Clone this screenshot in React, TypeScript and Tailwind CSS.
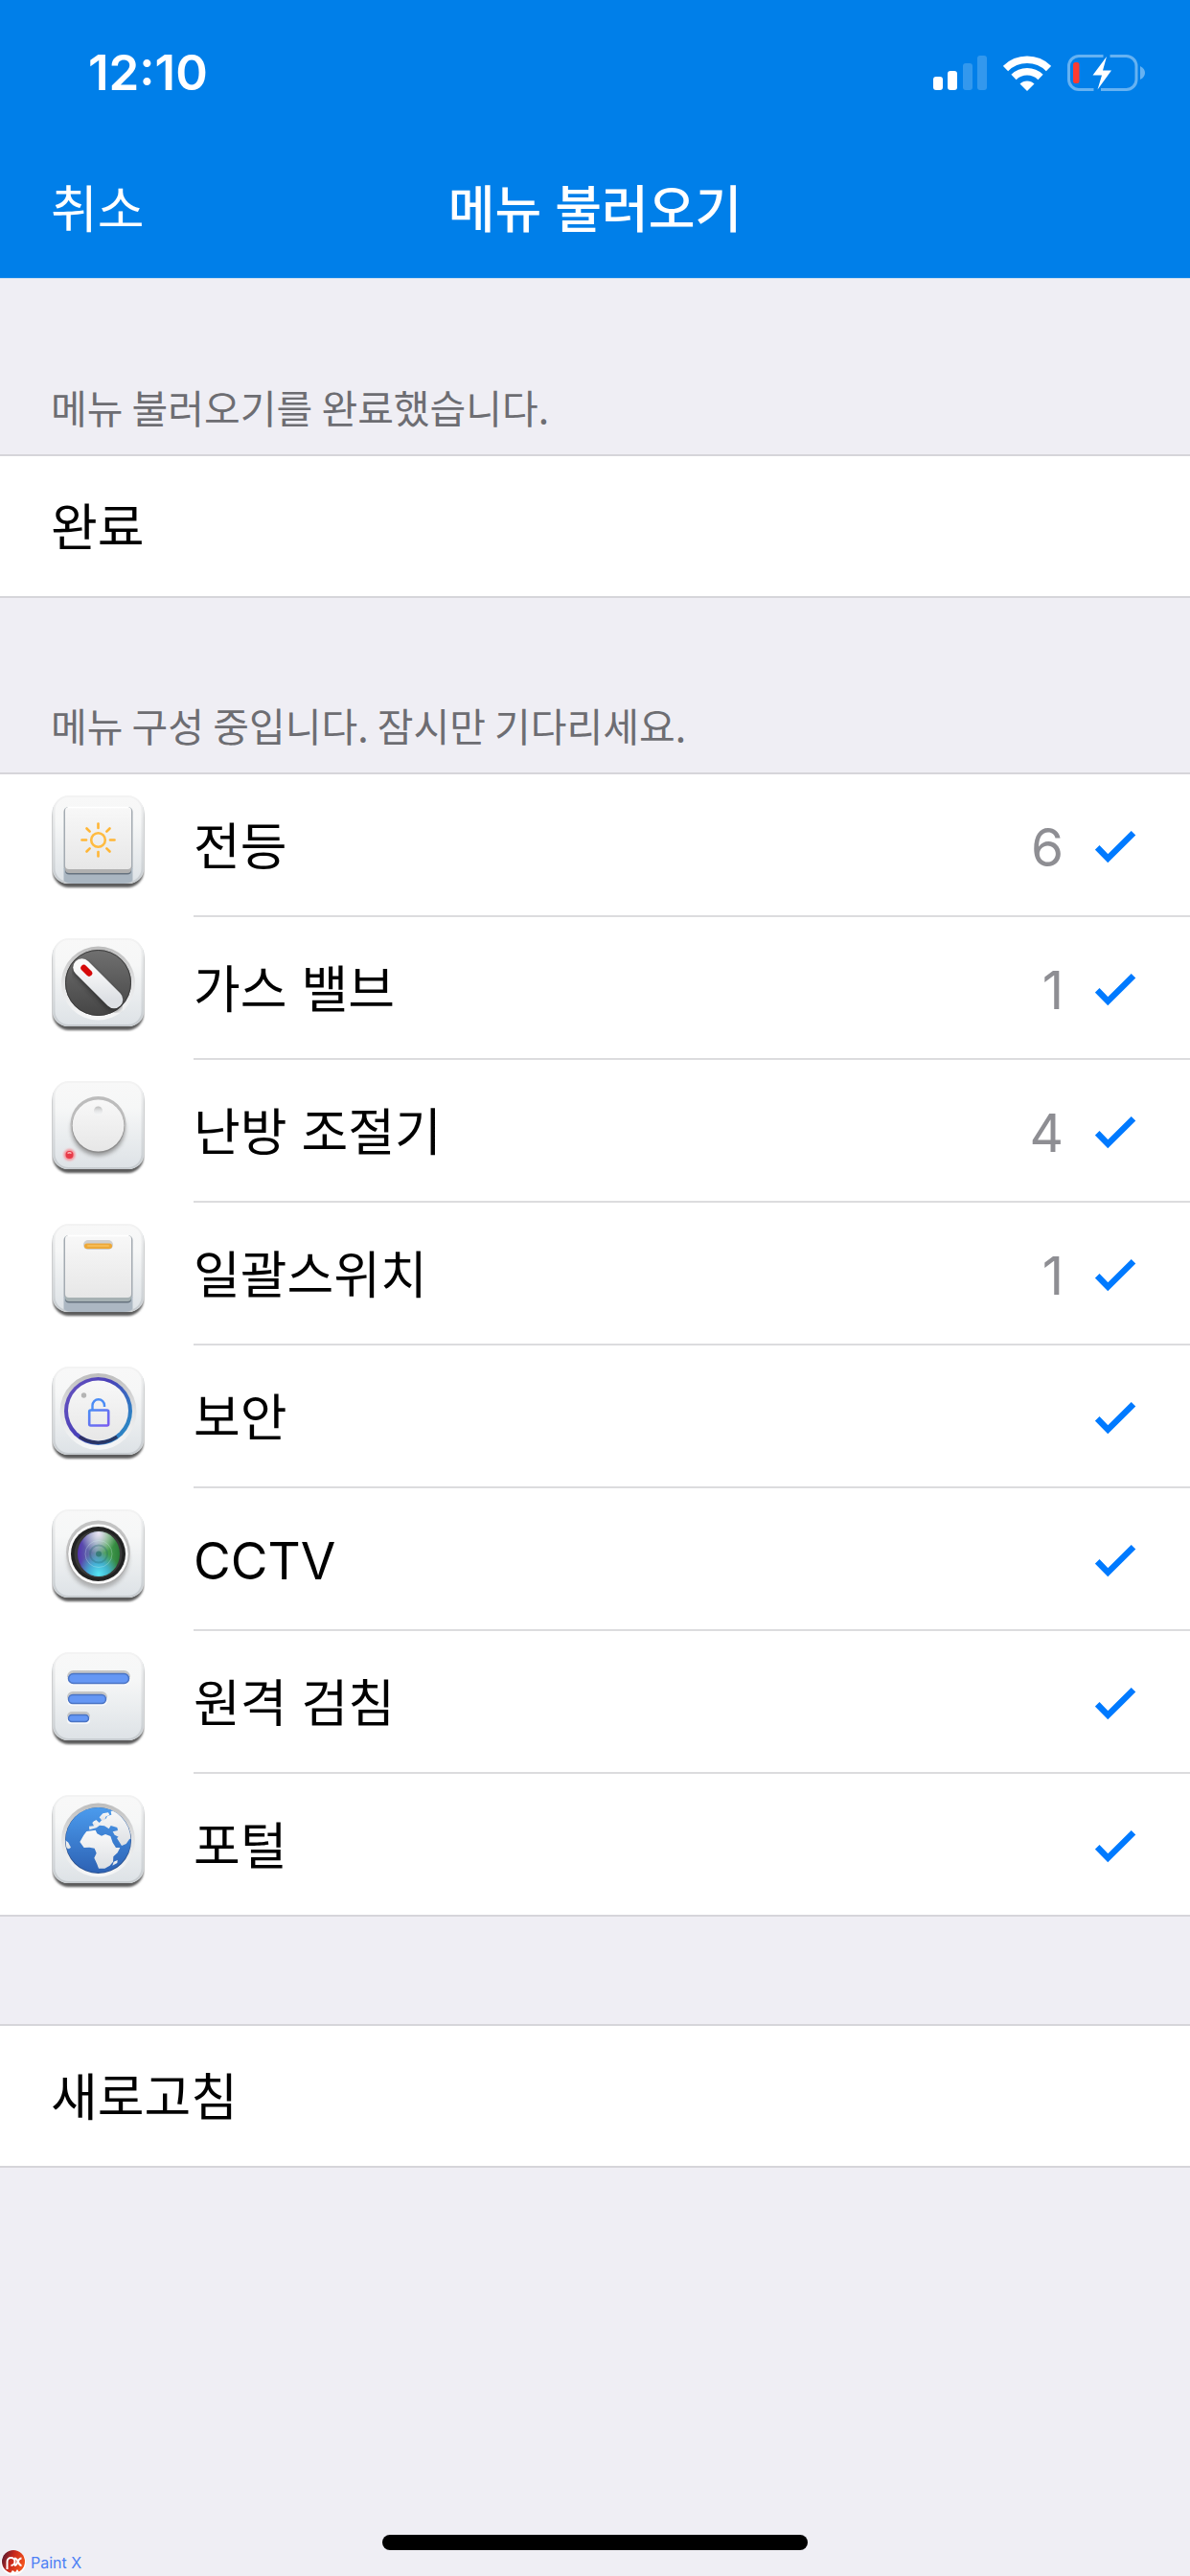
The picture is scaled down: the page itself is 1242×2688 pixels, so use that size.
import type { ReactNode } from "react";

type Item = { name: string; count?: number; icon: ReactNode };

// 공통 아이콘 바탕 (둥근 타일)
function Tile({ children }: { children: ReactNode }) {
  return (
    <svg viewBox="0 0 97 99" className="h-[99px] w-[97px] shrink-0" aria-hidden="true">
      <rect x="1" y="6" width="95" height="90" rx="17" fill="#5c5c5c" filter="url(#soft)" />
      <rect x="0.5" y="2" width="96" height="90" rx="16" fill="#cfd2d4" filter="url(#hair)" />
      <rect x="1.5" y="0.5" width="94" height="91.5" rx="16" fill="url(#tile)" />
      <rect x="2.5" y="1" width="92" height="90" rx="15" fill="none" stroke="url(#tileEdge)" strokeWidth="2" />
      {children}
    </svg>
  );
}

function Defs() {
  return (
    <svg width="0" height="0" className="absolute" aria-hidden="true">
      <defs>
        <filter id="soft" x="-10%" y="-10%" width="120%" height="120%"><feGaussianBlur stdDeviation="1" /></filter>
        <filter id="hair"><feGaussianBlur stdDeviation="0.6" /></filter>
        <filter id="shade" x="-30%" y="-30%" width="160%" height="160%"><feGaussianBlur stdDeviation="2" /></filter>
        <linearGradient id="tile" x1="0" y1="0" x2="0" y2="1">
          <stop offset="0" stopColor="#f8f8f8" />
          <stop offset="0.3" stopColor="#f6f7f7" />
          <stop offset="1" stopColor="#dde2e6" />
        </linearGradient>
        <linearGradient id="tileEdge" x1="0" y1="0" x2="0" y2="1">
          <stop offset="0" stopColor="#f3f3f3" />
          <stop offset="1" stopColor="#c6cbcf" />
        </linearGradient>
        <linearGradient id="key" x1="0" y1="0" x2="0" y2="1">
          <stop offset="0" stopColor="#f8f8f8" />
          <stop offset="1" stopColor="#e7e7e7" />
        </linearGradient>
        <linearGradient id="rim" x1="0" y1="0" x2="0" y2="1">
          <stop offset="0" stopColor="#bdbdbd" />
          <stop offset="0.5" stopColor="#e3e4e5" />
          <stop offset="1" stopColor="#f6f7f8" />
        </linearGradient>
        <linearGradient id="dark" x1="0" y1="0" x2="0" y2="1">
          <stop offset="0" stopColor="#707070" />
          <stop offset="1" stopColor="#454545" />
        </linearGradient>
        <linearGradient id="ring" x1="0" y1="0" x2="1" y2="0.6">
          <stop offset="0" stopColor="#6a55c0" />
          <stop offset="0.5" stopColor="#4a40b8" />
          <stop offset="1" stopColor="#2c84c4" />
        </linearGradient>
        <linearGradient id="lock" x1="0" y1="0" x2="1" y2="1">
          <stop offset="0" stopColor="#4b8cf5" />
          <stop offset="1" stopColor="#7a5cf0" />
        </linearGradient>
        <linearGradient id="lens" x1="0" y1="0" x2="1" y2="0">
          <stop offset="0" stopColor="#5230b0" />
          <stop offset="0.45" stopColor="#6c93a4" />
          <stop offset="0.7" stopColor="#4aa352" />
          <stop offset="1" stopColor="#2a7d38" />
        </linearGradient>
        <radialGradient id="lensTop" cx="0.5" cy="0.05" r="0.45">
          <stop offset="0" stopColor="#f3e8fa" stopOpacity="0.95" />
          <stop offset="1" stopColor="#f3e8fa" stopOpacity="0" />
        </radialGradient>
        <radialGradient id="lensLow" cx="0.5" cy="0.95" r="0.5">
          <stop offset="0" stopColor="#55e6f5" />
          <stop offset="0.5" stopColor="#3fb4dc" stopOpacity="0.85" />
          <stop offset="1" stopColor="#3fa4d0" stopOpacity="0" />
        </radialGradient>
        <linearGradient id="sea" x1="0" y1="0" x2="0" y2="1">
          <stop offset="0" stopColor="#4b9bed" />
          <stop offset="1" stopColor="#2d62b4" />
        </linearGradient>
        <linearGradient id="land" x1="0" y1="0" x2="0" y2="1">
          <stop offset="0" stopColor="#fafafa" />
          <stop offset="1" stopColor="#dde0e4" />
        </linearGradient>
        <linearGradient id="brand" x1="0" y1="0" x2="1" y2="0.4">
          <stop offset="0" stopColor="#3c1836" />
          <stop offset="0.5" stopColor="#c8281c" />
          <stop offset="1" stopColor="#f0501c" />
        </linearGradient>
        <clipPath id="globe"><circle cx="48.5" cy="47" r="34" /></clipPath>
      </defs>
    </svg>
  );
}

function Key({ well, slab }: { well: string; slab: string }) {
  return (
    <>
      <rect x="12.5" y="12" width="72" height="68" rx="5" fill="#a4abb2" filter="url(#hair)" />
      <path d="M12.5 76h72v13q-3 3-10 3h-52q-7 0-10-3z" fill={well} />
      <rect x="14" y="15" width="69" height="67.500" rx="4" fill="#66737f" filter="url(#hair)" />
      <rect x="14" y="14" width="69" height="67" rx="4" fill={slab} />
      <rect x="14" y="12" width="69" height="65" rx="4" fill="url(#key)" />
      <path d="M17 12.5h63" stroke="#fff" strokeWidth="1.5" />
    </>
  );
}

const rays = [0, 45, 90, 135, 180, 225, 270, 315];

const items: Item[] = [
  {
    name: "전등",
    count: 6,
    icon: (
      <Tile>
        <Key well="#aab6c1" slab="#b0b0b0" />
        <circle cx="48.5" cy="46.5" r="7.3" fill="none" stroke="#ffbb41" strokeWidth="2.6" />
        {rays.map((r) => (
          <path key={r} d="M48.5 29.500v4.500" stroke="#ffb636" strokeWidth="2.6" strokeLinecap="round" transform={`rotate(${r} 48.5 46.5)`} />
        ))}
      </Tile>
    ),
  },
  {
    name: "가스 밸브",
    count: 1,
    icon: (
      <Tile>
        <circle cx="48.5" cy="47" r="38.5" fill="url(#rim)" />
        <circle cx="48.5" cy="46.5" r="34.5" fill="url(#dark)" />
        <circle cx="48.5" cy="46.5" r="34" fill="none" stroke="#3c3c3c" />
        <path d="M31.5 33L64 67" stroke="#2b2b2b" strokeWidth="19" strokeLinecap="round" opacity="0.7" filter="url(#shade)" />
        <path d="M31.5 30.5L65 64" stroke="url(#land)" strokeWidth="18.5" strokeLinecap="round" />
        <path d="M33.5 31L39 36.5" stroke="#d60a0a" strokeWidth="6.5" strokeLinecap="round" />
      </Tile>
    ),
  },
  {
    name: "난방 조절기",
    count: 4,
    icon: (
      <Tile>
        <circle cx="48.5" cy="50" r="28" fill="#777" opacity="0.7" filter="url(#shade)" />
        <circle cx="48.5" cy="45" r="29" fill="#bcbcbc" />
        <circle cx="48.5" cy="47.5" r="27.5" fill="#8e8e8e" />
        <circle cx="48.5" cy="46.5" r="27" fill="url(#key)" />
        <circle cx="48.5" cy="31" r="4.5" fill="url(#rim)" />
        <circle cx="18.5" cy="77" r="6" fill="#f78f96" filter="url(#soft)" />
        <circle cx="18.5" cy="77" r="4" fill="#e63a48" />
        <path d="M16.5 75.5q2-1.5 4 0" fill="none" stroke="#fbb" strokeWidth="1.5" />
      </Tile>
    ),
  },
  {
    name: "일괄스위치",
    count: 1,
    icon: (
      <Tile>
        <Key well="#acb7c2" slab="#a6b1b3" />
        <rect x="33" y="17" width="31" height="10" rx="5" fill="#cfcfcf" filter="url(#hair)" />
        <rect x="34" y="20.5" width="29" height="5.5" rx="2.7" fill="#eda838" />
        <path d="M38 23h21" stroke="#f6bb53" strokeWidth="2" strokeLinecap="round" />
      </Tile>
    ),
  },
  {
    name: "보안",
    icon: (
      <Tile>
        <circle cx="48.5" cy="47" r="40" fill="url(#rim)" />
        <circle cx="48.5" cy="46.5" r="35.5" fill="url(#ring)" />
        <path d="M29 73a33.5 33.5 0 0 0 39 0" fill="none" stroke="#27284d" strokeWidth="3.5" opacity="0.8" />
        <circle cx="48.5" cy="46" r="31.5" fill="url(#key)" />
        <circle cx="33.5" cy="30" r="2.7" fill="#b4b4b4" />
        <rect x="39.2" y="45.5" width="20" height="16" rx="1.5" fill="none" stroke="url(#lock)" strokeWidth="2.6" />
        <path d="M42.5 45.5v-5a6.2 6.2 0 0 1 12.5 0v1.5" fill="none" stroke="#4b8cf5" strokeWidth="2.4" />
      </Tile>
    ),
  },
  {
    name: "CCTV",
    icon: (
      <Tile>
        <circle cx="48.5" cy="51" r="32" fill="#999" opacity="0.7" filter="url(#shade)" />
        <circle cx="48.5" cy="45" r="33.5" fill="#c3c3c3" />
        <circle cx="48.5" cy="47" r="32" fill="#aaa" />
        <circle cx="48.5" cy="46.5" r="31.3" fill="#fafafa" />
        <circle cx="48.5" cy="46.5" r="28.5" fill="#222" />
        <circle cx="48.5" cy="46.5" r="25" fill="#383838" />
        <ellipse cx="49" cy="46.5" rx="22" ry="23.5" fill="url(#lens)" />
        <ellipse cx="49" cy="46.5" rx="22" ry="23.5" fill="url(#lensTop)" />
        <ellipse cx="49" cy="46.5" rx="22" ry="23.5" fill="url(#lensLow)" />
        <circle cx="49" cy="46.5" r="14" fill="none" stroke="#d5f2ef" opacity="0.3" />
        <circle cx="49" cy="46.5" r="9" fill="none" stroke="#1e5f68" opacity="0.3" strokeWidth="2" />
        <circle cx="49" cy="46.5" r="3" fill="#1d6b5e" opacity="0.6" />
      </Tile>
    ),
  },
  {
    name: "원격 검침",
    icon: (
      <Tile>
        {[
          { y: 22, w: 64, h: 11 },
          { y: 44, w: 40, h: 10 },
          { y: 65, w: 22, h: 8 },
        ].map((b) => (
          <g key={b.y}>
            <rect x="16" y={b.y - 3} width={b.w + 2} height={b.h + 3} rx={b.h / 2 + 1} fill="#c4c5c6" filter="url(#hair)" />
            <rect x="16" y={b.y + 1} width={b.w + 2} height={b.h + 1} rx={b.h / 2} fill="#f7f8fa" />
            <rect x="17.5" y={b.y + 0.5} width={b.w - 1} height={b.h - 1} rx={b.h / 2 - 0.5} fill="#6597f4" stroke="#4a74c4" strokeWidth="1.5" />
          </g>
        ))}
      </Tile>
    ),
  },
  {
    name: "포털",
    icon: (
      <Tile>
        <circle cx="48.5" cy="47" r="38.5" fill="url(#rim)" />
        <circle cx="48.5" cy="47.5" r="34.5" fill="#2a508c" filter="url(#hair)" />
        <circle cx="48.5" cy="47" r="34" fill="url(#sea)" />
        <g clipPath="url(#globe)">
          <g transform="scale(0.3333) translate(-162 -519)" fill="url(#land)">
            <path d="M262 645l9-12 28-4 5 11 14 7 12-5 16 6 7 20 10 16 13 0-8 16-13 12-1 16-10 12-16 9h-19l-5-13-9-20 7-15-6-15-16-3-17 1-13-18z" />
            <path d="M280 628l-1-11 15-1-2-13 9-6 10 9 8-9 12-3 6-10 12-3-2-10 12-6 60 10 15 90-28-9-11 16-14 6-15-24 5-4-12-6-6-10 16-4-2-9-20-6-6 10-14-9-15-2-10 8z" />
            <path d="M311 589l11-12 17-3 4 7-12 6-3 10-9 2z" />
            <path d="M352 740l4-12 12-5-1 9z" />
            <path d="M204 660l10 8 8 15-6 5-10-3z" />
            <path d="M289 606l7-6 5 9-8 5z" />
          </g>
        </g>
      </Tile>
    ),
  },
];

function StatusIcons() {
  return (
    <div className="flex items-center gap-[17px]">
      <svg viewBox="0 0 56 36" className="h-9 w-14" fill="#fff" role="img" aria-label="신호 세기">
        <rect x="0" y="22" width="10" height="14" rx="3" />
        <rect x="15" y="16" width="10" height="20" rx="3" />
        <rect x="31" y="8" width="10" height="28" rx="3" opacity="0.2" />
        <rect x="46" y="0" width="10" height="36" rx="3" opacity="0.2" />
      </svg>
      <svg viewBox="0 0 50 37" className="h-[37px] w-[50px]" fill="none" stroke="#fff" strokeWidth="7.5" role="img" aria-label="Wi-Fi">
        <path d="M2.5 13.5a32 32 0 0 1 45 0" />
        <path d="M11 22.5a20 20 0 0 1 28 0" />
        <path d="M25 37l-7.5-7.5a10.6 10.6 0 0 1 15 0z" fill="#fff" stroke="none" />
      </svg>
      <svg viewBox="0 0 81 38" className="h-[38px] w-[81px]" role="img" aria-label="배터리 충전 중">
        <path
          d="M37.5 1.5H12A10.5 10.5 0 0 0 1.5 12v14A10.5 10.5 0 0 0 12 36.5h15.5M44.5 1.5H61.5A10.5 10.5 0 0 1 72 12v14A10.5 10.5 0 0 1 61.5 36.5H35"
          fill="none" stroke="#fff" strokeWidth="3" opacity="0.4"
        />
        <path d="M76 12q5 2.5 5 7t-5 7z" fill="#fff" opacity="0.4" />
        <rect x="6" y="8" width="6.5" height="22" rx="2.5" fill="#ff3b30" />
        <path d="M41 2L26.5 21.5h9.500L31.5 36.5 46 16.5h-9z" fill="#fff" />
      </svg>
    </div>
  );
}

function Check() {
  return (
    <svg viewBox="0 0 43 34" className="h-[34px] w-[43px]" role="img" aria-label="완료">
      <path d="M2.2 17.3L13.3 28.7 40 2.3" fill="none" stroke="#007aff" strokeWidth="6.5" />
    </svg>
  );
}

export default function App() {
  return (
    <div className="flex min-h-screen flex-col bg-[#efeef4] font-['Inter','Noto_Sans_CJK_KR',sans-serif] text-[53px] leading-[64px] text-black">
      <Defs />
      <header className="border-b border-[#c5dcf2] bg-[#007fe9] text-white">
        <div className="flex h-[152px] items-center justify-between pr-[47px] pl-[92px]">
          <time className="text-[51px] font-semibold">12:10</time>
          <StatusIcons />
        </div>
        <div className="grid h-[138px] grid-cols-3 items-center px-[53px] pb-1">
          <button type="button" className="justify-self-start">취소</button>
          <h1 className="justify-self-center font-medium whitespace-nowrap">메뉴 불러오기</h1>
        </div>
      </header>

      <main>
        <section>
          <h2 className="flex h-[183px] items-end px-[53px] pb-[18px] font-['Noto_Sans_CJK_KR',sans-serif] text-[41px] text-[#6d6d72]">메뉴 불러오기를 완료했습니다.</h2>
          <p className="flex h-[150px] items-center border-y-2 border-[#d6d5da] bg-white px-[53px] pt-1">완료</p>
        </section>

        <section>
          <h2 className="flex h-[182px] items-end px-[53px] pb-[18px] font-['Noto_Sans_CJK_KR',sans-serif] text-[41px] text-[#6d6d72]">메뉴 구성 중입니다. 잠시만 기다리세요.</h2>
          <ul className="border-y-2 border-[#d6d5da] bg-white">
            {items.map((it) => (
              <li key={it.name} className="group flex h-[149px] pl-[54px] last:h-[147px]">
                <div className="w-[148px] pt-[22px]">{it.icon}</div>
                <div className="flex flex-1 items-center border-b-2 border-[#dcdcde] pt-1 pr-14 group-last:border-b-0">
                  <span className="flex-1">{it.name}</span>
                  {it.count && <span className="pr-[33px] text-[55px] text-[#8e8e93]">{it.count}</span>}
                  <Check />
                </div>
              </li>
            ))}
          </ul>
        </section>

        <button type="button" className="mt-[112px] flex h-[150px] w-full items-center border-y-2 border-[#d6d5da] bg-white px-[53px] pt-1 text-left">
          새로고침
        </button>
      </main>

      <footer className="relative mt-auto flex justify-center pb-[27px]">
        <div className="h-4 w-[444px] rounded-full bg-black" />
        <div className="absolute bottom-0 left-0 flex items-center gap-1 text-base leading-7 text-[#4c80f5]">
          <svg viewBox="0 0 28 28" className="size-7" aria-hidden="true">
            <circle cx="14" cy="14" r="13" fill="#fff" />
            <circle cx="14" cy="13" r="12" fill="url(#brand)" />
            <path d="M7.5 21v-8a4 4 0 1 1 4 4M15 9.5c5 0 3 7.5 7.5 7.5M22.5 9.5c-5 0-3 7.5-7.5 7.5" fill="none" stroke="#fff" strokeWidth="2" />
            <path d="M11 25l2-3 3 2 2-3 2 3q-4 2-9 1z" fill="#fff" />
          </svg>
          <span>Paint X</span>
        </div>
      </footer>
    </div>
  );
}
